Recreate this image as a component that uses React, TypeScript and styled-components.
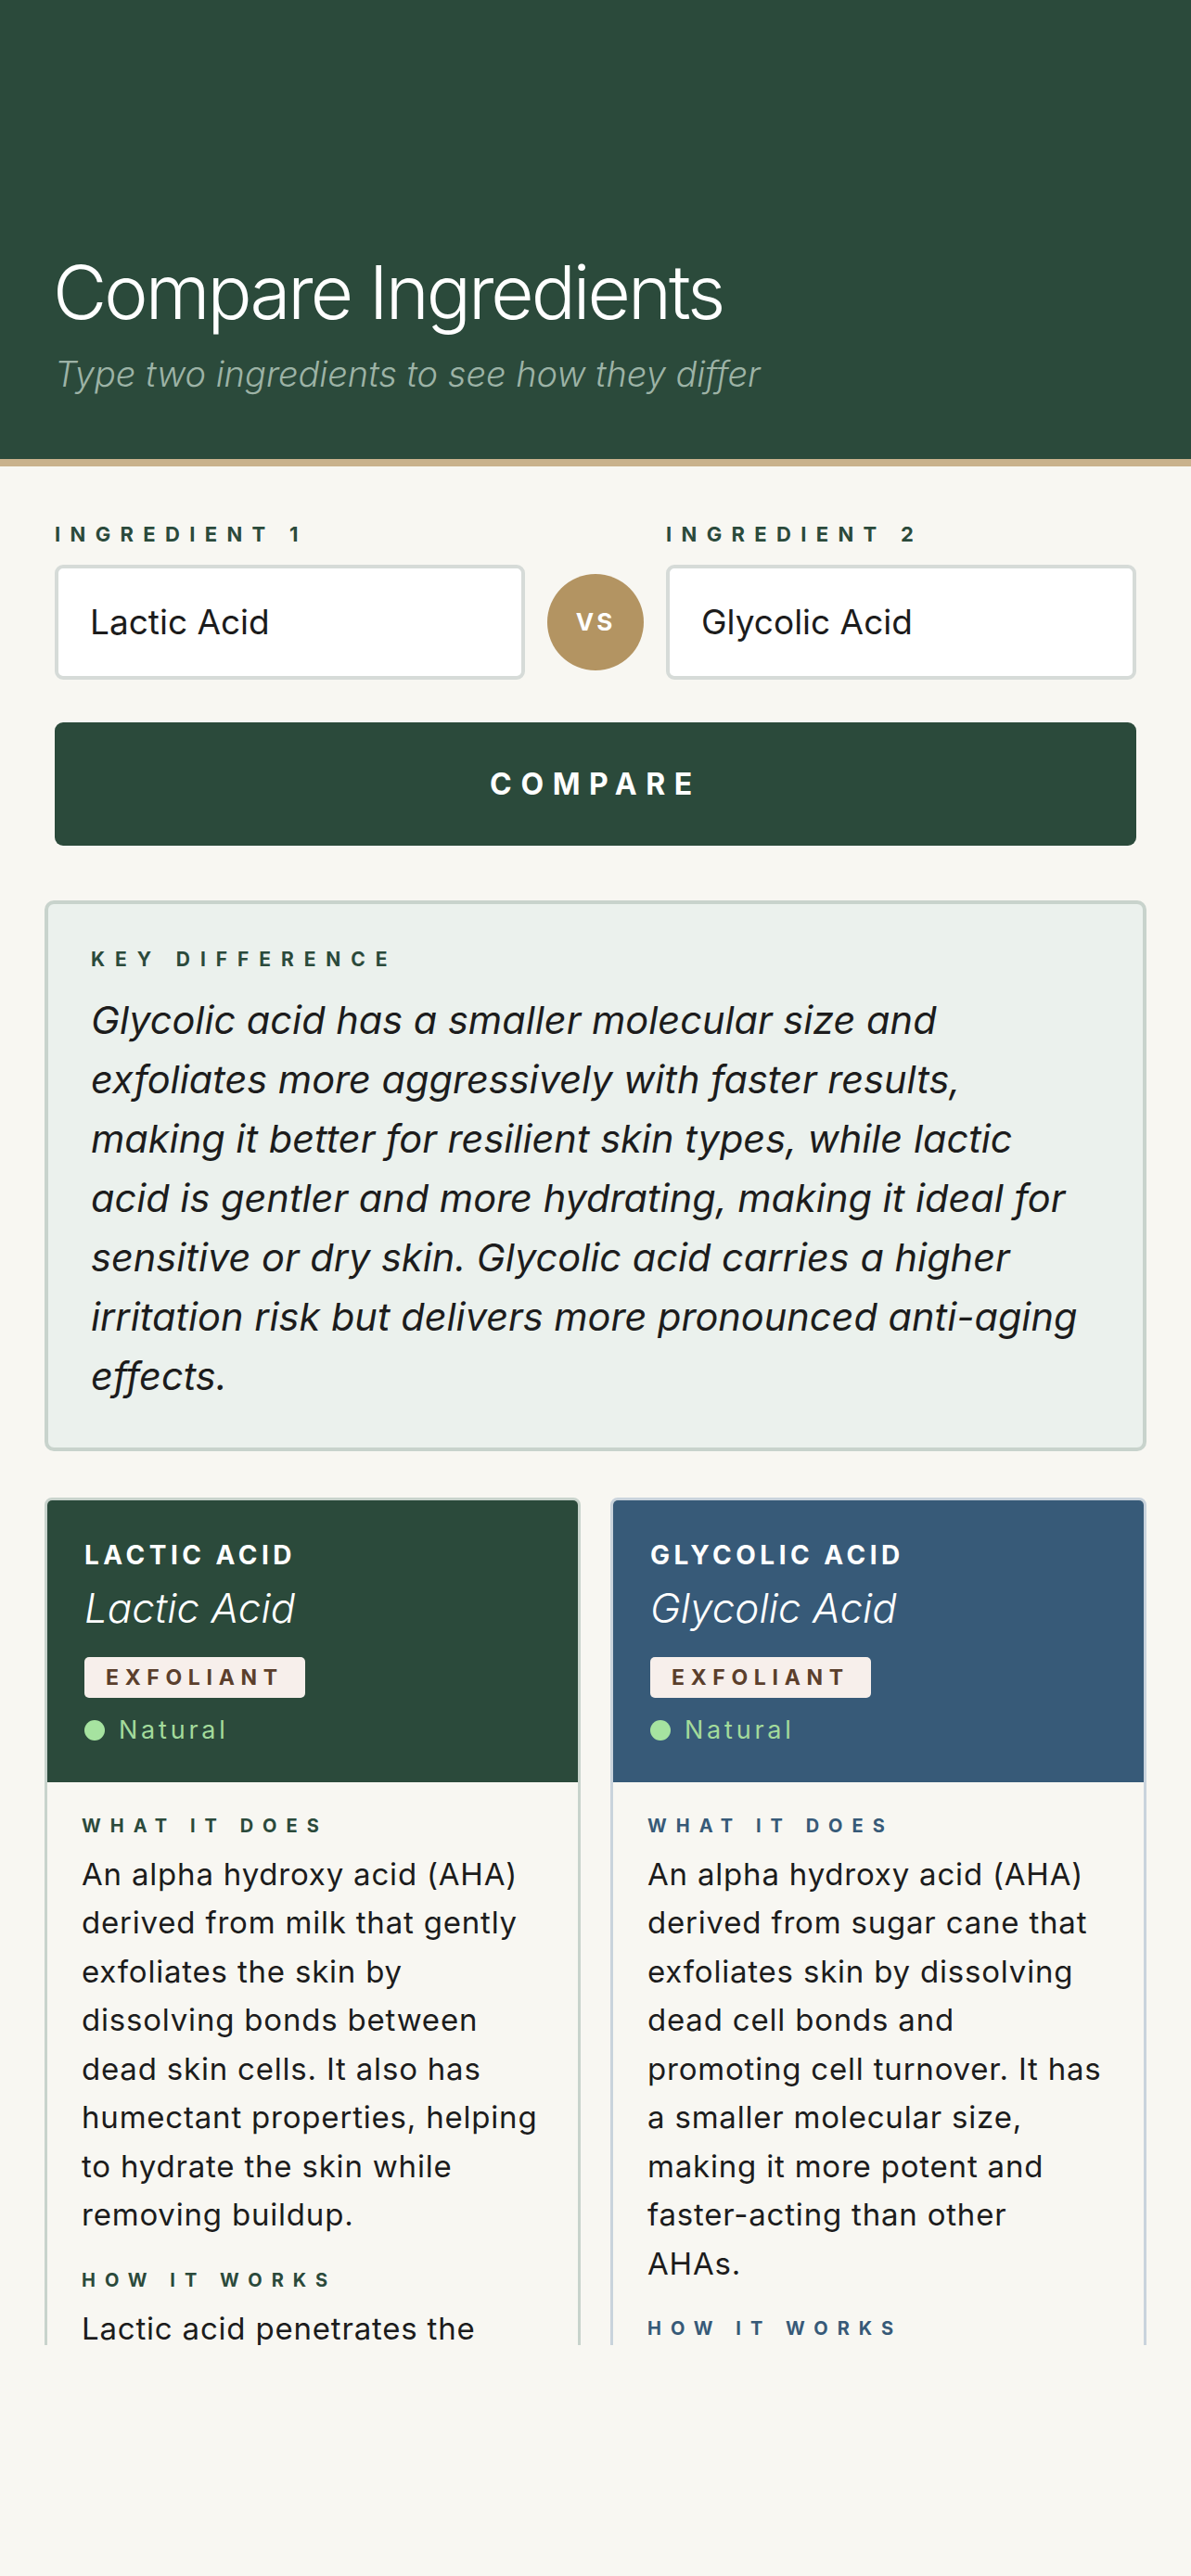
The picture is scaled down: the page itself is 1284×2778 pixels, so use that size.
import React from 'react';
import styled, { createGlobalStyle } from 'styled-components';

interface Ingredient {
  key: string;
  name: string;
  category: string;
  origin: string;
  what: string;
  how: string;
  accent: string;
  border: string;
}

const ingredients: Ingredient[] = [
  {
    key: 'LACTIC ACID',
    name: 'Lactic Acid',
    category: 'EXFOLIANT',
    origin: 'Natural',
    what:
      'An alpha hydroxy acid (AHA) derived from milk that gently exfoliates the skin by dissolving bonds between dead skin cells. It also has humectant properties, helping to hydrate the skin while removing buildup.',
    how:
      'Lactic acid penetrates the upper layers of the skin, loosening the glue that holds dead cells together so they shed evenly.',
    accent: '#2b4a3b',
    border: '#c8d3cc',
  },
  {
    key: 'GLYCOLIC ACID',
    name: 'Glycolic Acid',
    category: 'EXFOLIANT',
    origin: 'Natural',
    what:
      'An alpha hydroxy acid (AHA) derived from sugar cane that exfoliates skin by dissolving dead cell bonds and promoting cell turnover. It has a smaller molecular size, making it more potent and faster-acting than other AHAs.',
    how:
      'Glycolic acid penetrates deeply thanks to its tiny molecules, speeding up cell renewal and stimulating collagen.',
    accent: '#375a78',
    border: '#c9d3dc',
  },
];

const GlobalStyle = createGlobalStyle`
  * { box-sizing: border-box; }
  html, body {
    margin: 0;
    padding: 0;
    background: #f8f7f2;
  }
  body {
    font-family: Inter, "Liberation Sans", sans-serif;
    color: #1c1c1c;
  }
`;

export default function App() {
  return (
    <>
      <GlobalStyle />
      <Page>
        <Scroll>
          <Header>
            <Title>Compare Ingredients</Title>
            <Subtitle>Type two ingredients to see how they differ</Subtitle>
          </Header>

          <Form>
            <InputRow>
              <Field>
                <Label>Ingredient 1</Label>
                <Input defaultValue="Lactic Acid" />
              </Field>
              <Vs>VS</Vs>
              <Field>
                <Label>Ingredient 2</Label>
                <Input defaultValue="Glycolic Acid" />
              </Field>
            </InputRow>
            <CompareButton>Compare</CompareButton>
          </Form>

          <Results>
            <KeyCard>
              <KeyLabel>Key Difference</KeyLabel>
              <KeyText>
                Glycolic acid has a smaller molecular size and exfoliates more aggressively with
                faster results, making it better for resilient skin types, while lactic acid is
                gentler and more hydrating, making it ideal for sensitive or dry skin. Glycolic acid
                carries a higher irritation risk but delivers more pronounced anti-aging effects.
              </KeyText>
            </KeyCard>

            <CardGrid>
              {ingredients.map(item => (
                <Card key={item.key} $border={item.border}>
                  <CardHead $bg={item.accent}>
                    <CardKey>{item.key}</CardKey>
                    <CardName>{item.name}</CardName>
                    <Badge>{item.category}</Badge>
                    <Origin>
                      <Dot />
                      {item.origin}
                    </Origin>
                  </CardHead>
                  <CardBody>
                    <SectionLabel $color={item.accent}>What it does</SectionLabel>
                    <BodyText>{item.what}</BodyText>
                    <SectionLabel $color={item.accent}>How it works</SectionLabel>
                    <BodyText>{item.how}</BodyText>
                  </CardBody>
                </Card>
              ))}
            </CardGrid>
          </Results>
        </Scroll>
      </Page>
    </>
  );
}

const Page = styled.div`
  height: 100vh;
  display: flex;
  flex-direction: column;
  padding-bottom: 249px;
`;

const Scroll = styled.main`
  flex: 1;
  min-height: 0;
  overflow: hidden;
`;

const Header = styled.header`
  background: #2b4a3b;
  border-bottom: 8px solid #c9b28c;
  padding: 271px 59px 67px;
`;

const Title = styled.h1`
  margin: 0 0 20px -2px;
  font-size: 80px;
  font-weight: 300;
  line-height: 1.1;
  color: #ffffff;
  letter-spacing: -3px;
`;

const Subtitle = styled.p`
  margin: 0;
  font-size: 38px;
  font-style: italic;
  font-weight: 300;
  line-height: 1.3;
  color: #9db3a6;
`;

const Form = styled.section`
  padding: 60px 59px 0;
`;

const InputRow = styled.div`
  display: grid;
  grid-template-columns: 1fr 104px 1fr;
  gap: 24px;
  align-items: end;
`;

const Field = styled.label`
  display: flex;
  flex-direction: column;
  gap: 19px;
`;

const Label = styled.span`
  font-size: 22px;
  line-height: 1.2;
  font-weight: 700;
  letter-spacing: 0.47em;
  text-transform: uppercase;
  color: #2b4a3b;
`;

const Input = styled.input`
  height: 124px;
  width: 100%;
  border: 4px solid #d6dbd8;
  border-radius: 9px;
  background: #ffffff;
  padding: 0 34px;
  font-family: Inter, "Liberation Sans", sans-serif;
  font-size: 37px;
  color: #1c1c1c;
  outline: none;
`;

const Vs = styled.div`
  width: 104px;
  height: 104px;
  margin-bottom: 10px;
  border-radius: 50%;
  background: #b39462;
  color: #ffffff;
  display: flex;
  align-items: center;
  justify-content: center;
  font-size: 26px;
  font-weight: 700;
  letter-spacing: 0.12em;
`;

const CompareButton = styled.button`
  display: block;
  width: 100%;
  height: 133px;
  margin-top: 46px;
  border: none;
  border-radius: 9px;
  background: #2b4a3b;
  color: #ffffff;
  font-family: Inter, "Liberation Sans", sans-serif;
  font-size: 32px;
  font-weight: 700;
  letter-spacing: 0.3em;
  text-transform: uppercase;
`;

const Results = styled.section`
  padding: 59px 48px 0;
`;

const KeyCard = styled.div`
  background: #ebf1ed;
  border: 4px solid #c8d3cc;
  border-radius: 10px;
  padding: 47px 46px 45px;
`;

const KeyLabel = styled.div`
  font-size: 21px;
  line-height: 1.2;
  font-weight: 700;
  letter-spacing: 0.52em;
  text-transform: uppercase;
  color: #2b4a3b;
`;

const KeyText = styled.p`
  margin: 21px 0 0;
  font-size: 41.5px;
  font-style: italic;
  line-height: 64px;
  color: #1c1c1c;
`;

const CardGrid = styled.div`
  display: grid;
  grid-template-columns: 1fr 1fr;
  gap: 32px;
  margin-top: 50px;
  align-items: start;
`;

const Card = styled.article<{ $border: string }>`
  border: 3px solid ${props => props.$border};
  border-radius: 8px;
  overflow: hidden;
`;

const CardHead = styled.div<{ $bg: string }>`
  background: ${props => props.$bg};
  padding: 43px 40px 40px;
  display: flex;
  flex-direction: column;
  align-items: flex-start;
`;

const CardKey = styled.div`
  font-size: 28px;
  line-height: 1.2;
  font-weight: 700;
  letter-spacing: 0.16em;
  color: #ffffff;
`;

const CardName = styled.div`
  margin-top: 12px;
  font-size: 44px;
  line-height: 1.25;
  font-style: italic;
  font-weight: 300;
  color: #ffffff;
`;

const Badge = styled.span`
  margin-top: 25px;
  height: 44px;
  padding: 0 23px;
  display: inline-flex;
  align-items: center;
  border-radius: 5px;
  background: #f7efeb;
  color: #5b3f2c;
  font-size: 23px;
  font-weight: 700;
  letter-spacing: 0.29em;
`;

const Origin = styled.div`
  margin-top: 19px;
  display: flex;
  align-items: center;
  gap: 15px;
  font-size: 27px;
  line-height: 32px;
  letter-spacing: 0.14em;
  color: #a3db9b;
`;

const Dot = styled.span`
  width: 22px;
  height: 22px;
  border-radius: 50%;
  background: #a6e3a0;
`;

const CardBody = styled.div`
  padding: 35px 37px 40px;
`;

const SectionLabel = styled.div<{ $color: string }>`
  font-size: 20px;
  line-height: 1.2;
  font-weight: 700;
  letter-spacing: 0.5em;
  text-transform: uppercase;
  color: ${props => props.$color};
`;

const BodyText = styled.p`
  margin: 14px 0 32px;
  font-size: 33px;
  line-height: 52.5px;
  letter-spacing: 0.8px;
  color: #1c1c1c;
`;
